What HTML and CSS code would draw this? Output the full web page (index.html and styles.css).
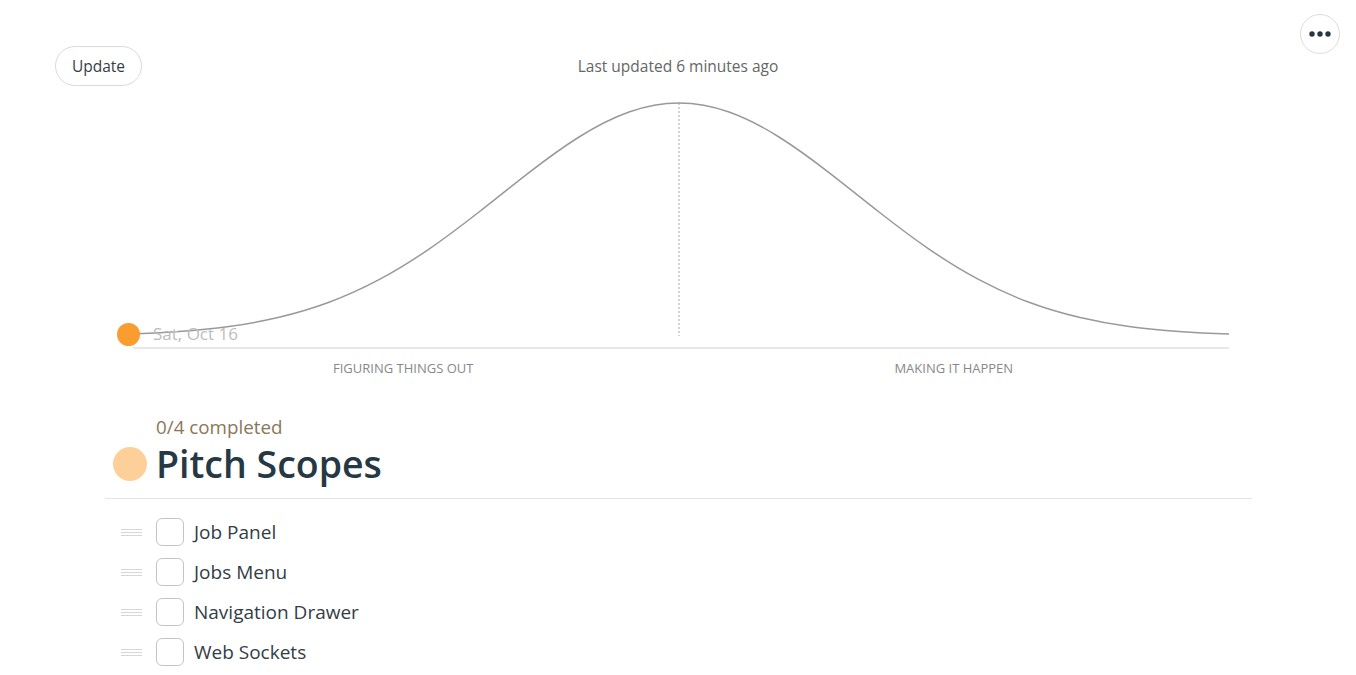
FILE: index.html
```html
<!DOCTYPE html>
<html lang="en">
<head>
<meta charset="utf-8">
<title>Pitch Scopes</title>
<link rel="stylesheet" href="styles.css">
</head>
<body>
<button class="more" aria-label="More">
  <svg width="22" height="6" viewBox="0 0 22 6"><circle cx="3" cy="3" r="2.7"/><circle cx="11" cy="3" r="2.7"/><circle cx="19" cy="3" r="2.7"/></svg>
</button>
<header class="top">
  <div class="top-left"><button class="update">Update</button></div>
  <span class="last-updated">Last updated 6 minutes ago</span>
  <div></div>
</header>
<div class="chart">
  <svg class="hill" width="1147" height="274" viewBox="105 86 1147 274">
    <line class="ground" x1="133" y1="348" x2="1229" y2="348"/>
    <line class="mid" x1="679" y1="103" x2="679" y2="336"/>
    <path class="curve" d="M129,334 C145.67,333.43 162.33,332.68 179,331.5 C195.67,330.32 212.33,328.76 229,326.5 C245.67,324.24 262.33,321.23 279,317.3 C295.67,313.37 312.33,308.51 329,302.3 C345.67,296.09 362.33,288.58 379,279.7 C395.67,270.82 412.33,260.53 429,249.1 C445.67,237.67 462.33,225.04 479,212 C495.67,198.96 512.33,185.49 529,172.6 C545.67,159.71 562.33,147.47 579,137 C595.67,126.53 612.33,117.89 629,112 C645.67,106.11 662.33,103 679,103 C695.67,103 712.33,106.11 729,112 C745.67,117.89 762.33,126.53 779,137 C795.67,147.47 812.33,159.71 829,172.6 C845.67,185.49 862.33,198.96 879,212 C895.67,225.04 912.33,237.67 929,249.1 C945.67,260.53 962.33,270.82 979,279.7 C995.67,288.58 1012.33,296.09 1029,302.3 C1045.67,308.51 1062.33,313.37 1079,317.3 C1095.67,321.23 1112.33,324.24 1129,326.5 C1145.67,328.76 1162.33,330.32 1179,331.5 C1195.67,332.68 1212.33,333.43 1229,334"/>
    <circle class="pos" cx="128.5" cy="334.5" r="11.5"/>
    <text class="date" x="153" y="340">Sat, Oct 16</text>
  </svg>
  <div class="phases">
    <span>FIGURING THINGS OUT</span>
    <span>MAKING IT HAPPEN</span>
  </div>
</div>
<section class="scope">
  <div class="progress">0/4 completed</div>
  <div class="title-row">
    <span class="scope-dot"></span>
    <h1>Pitch Scopes</h1>
  </div>
  <ul class="tasks">
    <li><span class="handle"></span><span class="check"></span><span class="label">Job Panel</span></li>
    <li><span class="handle"></span><span class="check"></span><span class="label">Jobs Menu</span></li>
    <li><span class="handle"></span><span class="check"></span><span class="label">Navigation Drawer</span></li>
    <li><span class="handle"></span><span class="check"></span><span class="label">Web Sockets</span></li>
  </ul>
</section>
</body>
</html>
```
FILE: styles.css
```css
* { box-sizing: border-box; }
html, body { margin: 0; padding: 0; background: #fff; }
body {
  font-family: "Open Sans", "Noto Sans", "Liberation Sans", sans-serif;
  color: #333d45;
  width: 1356px;
  height: 675px;
  overflow: hidden;
  position: relative;
}
.more {
  position: absolute;
  top: 14px;
  right: 16px;
  width: 40px;
  height: 40px;
  border-radius: 50%;
  border: 1px solid #dcdcdc;
  background: #fff;
  padding: 0;
  display: flex;
  align-items: center;
  justify-content: center;
}
.more svg { display: block; fill: #263844; }
.top {
  display: grid;
  grid-template-columns: 1fr auto 1fr;
  align-items: center;
  padding: 46px 55px 0 55px;
  height: 86px;
}
.update {
  height: 40px;
  width: 87px;
  border-radius: 20px;
  border: 1px solid #dadada;
  background: #fff;
  font-family: inherit;
  font-size: 15.5px;
  color: #333d45;
  padding: 0;
}
.last-updated {
  font-size: 15.5px;
  color: #666;
}
.chart { margin-left: 105px; width: 1147px; }
.hill { display: block; }
.ground { stroke: #e8e8e8; stroke-width: 2; }
.mid { stroke: #aaa; stroke-width: 1; stroke-dasharray: 2 2; }
.curve { fill: none; stroke: #999; stroke-width: 1.5; }
.pos { fill: #f89d2e; }
.date { font-family: "Open Sans", sans-serif; font-size: 17px; fill: #bdbdbd; }
.phases {
  display: flex;
  margin-left: 23px;
  width: 1101px;
  height: 16px;
  line-height: 16px;
  font-size: 13px;
  color: #888;
}
.phases span { flex: 1; text-align: center; }
.scope {
  margin: 39px 0 0 105px;
  width: 1147px;
}
.progress {
  padding-left: 51px;
  font-size: 18.8px;
  line-height: 24px;
  color: #8a7658;
}
.title-row {
  display: flex;
  align-items: center;
  padding-left: 8px;
  padding-top: 2px;
  height: 46px;
  border-bottom: 1px solid #e3e3e3;
  box-sizing: content-box;
  padding-bottom: 11px;
}
.scope-dot {
  width: 34px;
  height: 34px;
  border-radius: 50%;
  background: #fdd09a;
  margin-right: 9px;
  flex: none;
}
h1 {
  margin: 0;
  font-size: 37.5px;
  font-weight: 600;
  line-height: 46px;
  color: #263844;
}
.tasks { list-style: none; margin: 13px 0 0; padding: 0; }
.tasks li {
  display: flex;
  align-items: center;
  height: 40px;
  padding-left: 16px;
}
.handle {
  width: 21px;
  height: 7px;
  border-top: 1px solid #d6d6d6;
  border-bottom: 1px solid #d6d6d6;
  position: relative;
  margin-right: 14px;
  flex: none;
}
.handle::after {
  content: "";
  position: absolute;
  left: 0; right: 0; top: 2px;
  border-top: 1px solid #d6d6d6;
}
.check {
  width: 28px;
  height: 28px;
  border: 1px solid #c4c4c4;
  border-radius: 6px;
  margin-right: 10px;
  flex: none;
}
.label { font-size: 19px; color: #333d45; }
```
